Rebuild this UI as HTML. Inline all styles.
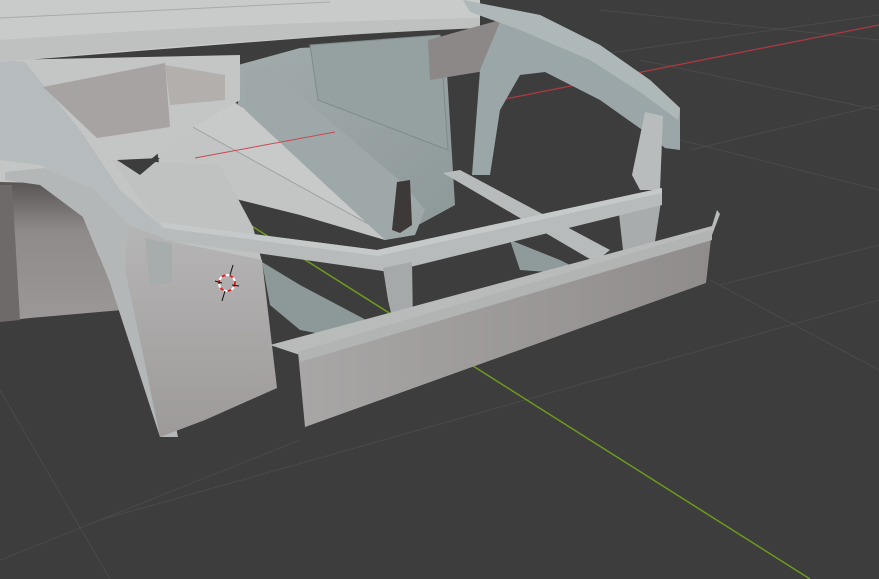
<!DOCTYPE html>
<html><head><meta charset="utf-8"><style>html,body{margin:0;padding:0;background:#3d3d3d;overflow:hidden}svg{display:block}</style></head><body>
<svg width="879" height="579" viewBox="0 0 879 579" xmlns="http://www.w3.org/2000/svg">
<defs>
<linearGradient id="well" x1="0" y1="0" x2="0" y2="1"><stop offset="0" stop-color="#5a5555"/><stop offset="0.35" stop-color="#8e8a8a"/><stop offset="1" stop-color="#9c9898"/></linearGradient>
<linearGradient id="fw" x1="0" y1="0" x2="1" y2="1"><stop offset="0" stop-color="#a3acad"/><stop offset="1" stop-color="#8d9899"/></linearGradient>
<linearGradient id="bump" x1="0" y1="0" x2="1" y2="0"><stop offset="0" stop-color="#a9a7a6"/><stop offset="1" stop-color="#8f8c8b"/></linearGradient>
<linearGradient id="fend" x1="0" y1="0" x2="0" y2="1"><stop offset="0" stop-color="#b6b5b5"/><stop offset="1" stop-color="#9d9a99"/></linearGradient>
</defs>
<rect width="879" height="579" fill="#3d3d3d"/>
<g stroke="#4a4a4a" stroke-width="1" fill="none">
<line x1="560" y1="60" x2="879" y2="15"/>
<line x1="690" y1="150" x2="879" y2="105"/>
<line x1="720" y1="285" x2="879" y2="245"/>
<line x1="0" y1="560" x2="300" y2="440"/>
<line x1="600" y1="10" x2="879" y2="40"/><line x1="640" y1="60" x2="879" y2="110"/>
<line x1="680" y1="140" x2="879" y2="190"/><line x1="710" y1="280" x2="879" y2="370"/>
<line x1="0" y1="390" x2="110" y2="579"/>
<line x1="100" y1="520" x2="879" y2="300"/>
</g>
<line x1="500" y1="100" x2="879" y2="25" stroke="#a83a42" stroke-width="1.3"/>
<line x1="250" y1="225" x2="810" y2="579" stroke="#6d9a1e" stroke-width="1.5"/>
<!-- firewall interior -->
<polygon points="238,65 300,48 445,40 455,205 400,235 238,175" fill="url(#fw)"/>
<polygon points="310,45 440,35 448,150 318,100" fill="#95a0a1" stroke="#7f8a8b" stroke-width="1"/>
<!-- floor plate -->
<polygon points="150,100 230,95 245,115 400,200 405,235 385,240 300,215 200,190 160,170" fill="#c3c5c5"/>
<polygon points="175,112 230,100 410,200 400,215 370,225 180,120" fill="#c8caca" stroke="#9aa3a3" stroke-width="1"/>
<polygon points="245,70 265,66 405,185 425,210 415,235 385,240 245,110" fill="#9ea8a9"/>
<line x1="195" y1="158" x2="335" y2="132" stroke="#c84a52" stroke-width="1"/>
<polygon points="397,182 410,180 412,225 400,233 392,230" fill="#3e3939"/>
<!-- left body -->
<polygon points="0,60 240,55 240,100 180,135 150,160 165,240 120,260 0,240" fill="#c4c5c5"/>
<polygon points="0,60 25,62 80,130 120,190 160,225 165,240 130,230 90,190 40,165 0,160" fill="#b6bcbd"/>
<polygon points="43,87 165,63 170,127 97,138" fill="#a7a3a2"/>
<polygon points="165,65 225,75 225,100 170,105" fill="#b3afad"/>
<!-- roof -->
<path d="M0,0 H480 V25 Q300,38 0,62 Z" fill="#c9cbcb"/>
<path d="M0,40 Q250,22 480,18 L480,28 Q250,38 0,62 Z" fill="#bfc1c1"/>
<path d="M0,18 Q200,8 330,2" stroke="#a9abab" stroke-width="1" fill="none"/>
<!-- top right box -->
<polygon points="428,40 500,20 503,68 430,80" fill="#8c8887"/>
<!-- right A-pillar -->
<polygon points="463,0 540,15 600,45 650,80 680,108 680,150 665,148 648,134 600,100 545,72 520,75 500,110 490,175 472,175 480,70 500,22" fill="#9aa6a7"/>
<polygon points="463,0 540,15 600,45 650,80 680,108 678,120 640,92 590,60 520,30 470,12" fill="#aeb8b9"/>
<!-- right post -->
<polygon points="645,112 663,116 660,190 640,190 632,175" fill="#b9bcbc"/>
<polygon points="618,205 662,195 654,248 623,250" fill="#a9acac"/>
<!-- diagonal rear strut -->
<polygon points="443,173 460,170 610,250 595,262" fill="#b8bbbb"/>
<polygon points="510,240 560,260 590,275 520,270" fill="#8f9a9a"/>
<!-- lower strut left -->
<polygon points="262,262 300,285 385,330 380,345 300,330 270,305" fill="#8d9999"/>
<!-- panel above fender -->
<polygon points="112,160 220,165 253,227 262,262 175,245 140,200" fill="#c0c2c2"/>
<polygon points="117,160 160,158 140,175" fill="#3d3d3d"/>
<!-- wheel well -->
<polygon points="0,182 40,183 83,217 110,283 122,310 30,318 12,320 0,300" fill="url(#well)"/>
<polygon points="0,185 12,185 20,320 0,322" fill="#6f6a6a"/>
<!-- arch band -->
<polygon points="5,172 45,168 95,190 128,225 150,300 178,437 160,437 110,283 83,217 40,185 5,180" fill="#b4b7b7"/>
<!-- fender panel -->
<polygon points="128,225 175,242 262,260 277,388 205,420 160,437 140,340 125,270" fill="url(#fend)"/>
<polygon points="145,238 172,244 172,282 150,286" fill="#a7adad"/>
<!-- main crossbar -->
<polygon points="160,222 377,250 662,188 662,205 390,272 165,240" fill="#b8bbbb"/>
<polygon points="160,222 377,250 662,188 662,193 378,256 163,228" fill="#c6c9c9"/>
<!-- center post -->
<polygon points="383,268 412,262 413,325 395,330 388,300" fill="#a5a9a9"/>
<!-- bumper -->
<polygon points="270,345 712,226 717,210 720,214 712,235 300,355" fill="#b9bbbb"/>
<polygon points="298,352 712,230 706,283 305,427" fill="url(#bump)"/>
<polygon points="298,352 712,230 712,240 300,362" fill="#b2b3b3"/>
<!-- 3D cursor -->
<g transform="translate(227,283)">
<circle r="8" fill="none" stroke="#fff" stroke-width="2"/>
<circle r="8" fill="none" stroke="#d22" stroke-width="2" stroke-dasharray="4 4"/>
<line x1="-12" y1="-2" x2="-5" y2="0" stroke="#111" stroke-width="1"/><line x1="5" y1="2" x2="12" y2="3" stroke="#111" stroke-width="1"/>
<line x1="6" y1="-18" x2="3" y2="-8" stroke="#111" stroke-width="1"/><line x1="-2" y1="8" x2="-5" y2="18" stroke="#111" stroke-width="1"/>
</g>
</svg>
</body></html>
